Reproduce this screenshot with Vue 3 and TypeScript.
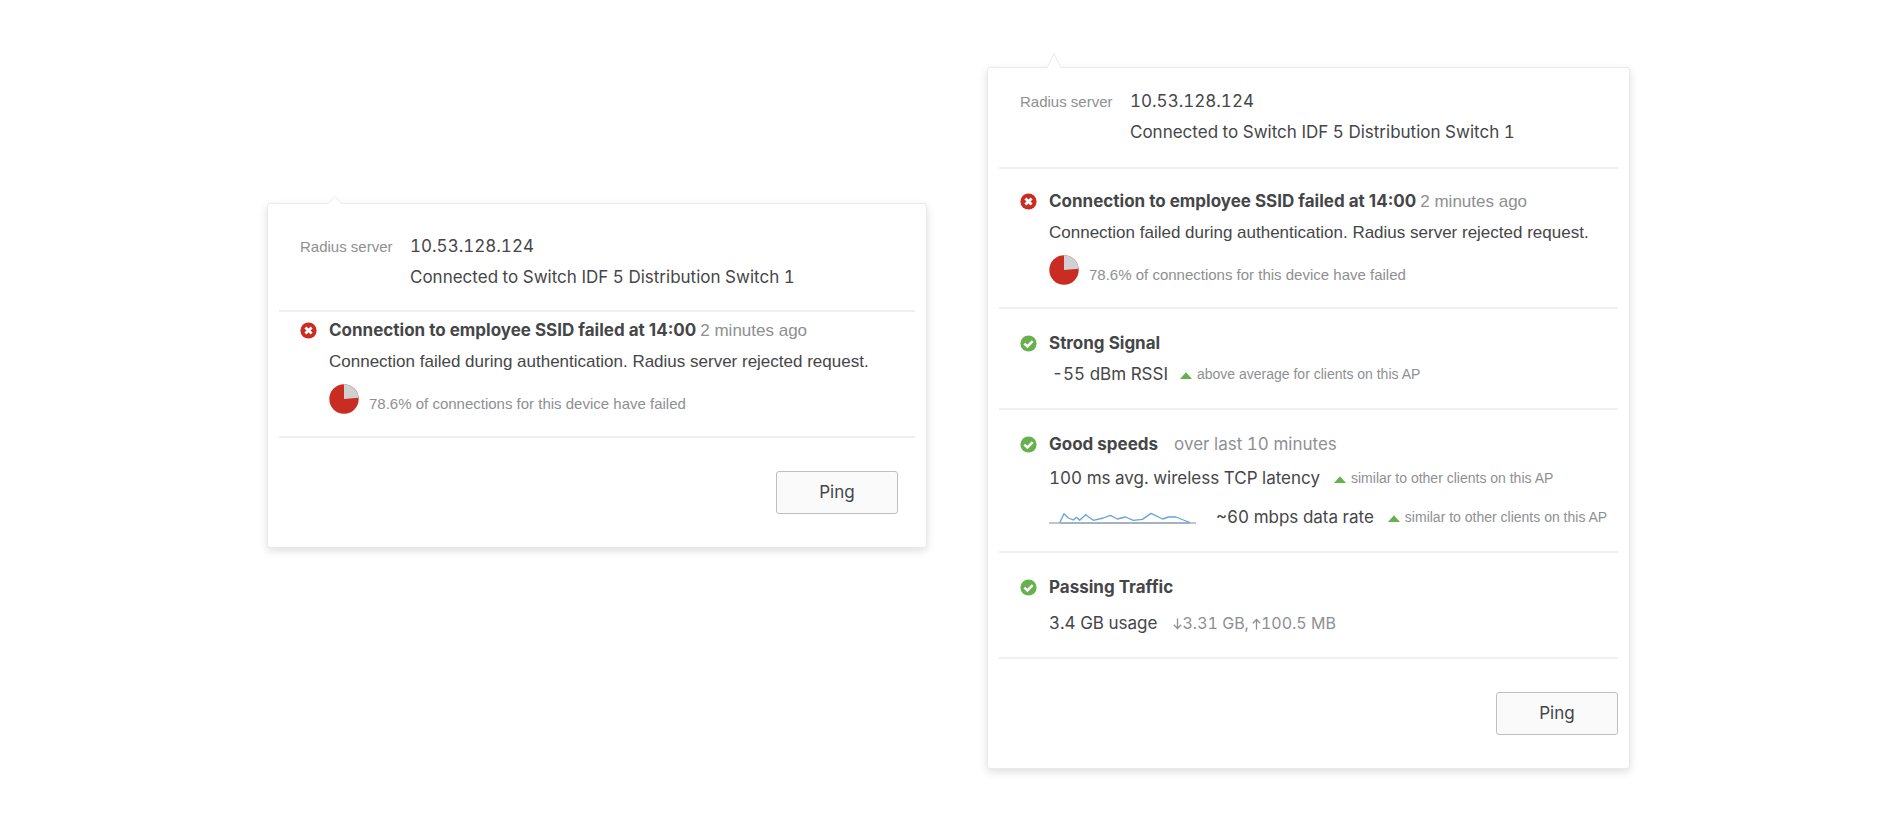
<script setup lang="ts">
interface Metric {
  text: string
  note?: string
  indent?: boolean
  chart?: boolean
  transfer?: { down: string; up: string }
}

interface Check {
  title: string
  aside?: string
  metrics: Metric[]
}

interface Card {
  id: string
  variant: 'compact' | 'full'
  checks: Check[]
}

const checks: Check[] = [
  {
    title: 'Strong Signal',
    metrics: [{ text: '-55 dBm RSSI', note: 'above average for clients on this AP', indent: true }],
  },
  {
    title: 'Good speeds',
    aside: 'over last 10 minutes',
    metrics: [
      { text: '100 ms avg. wireless TCP latency', note: 'similar to other clients on this AP' },
      { text: '~60 mbps data rate', note: 'similar to other clients on this AP', chart: true },
    ],
  },
  {
    title: 'Passing Traffic',
    metrics: [{ text: '3.4 GB usage', transfer: { down: '3.31 GB,', up: '100.5 MB' } }],
  },
]

const cards: Card[] = [
  { id: 'summary', variant: 'compact', checks: [] },
  { id: 'details', variant: 'full', checks },
]
</script>

<template>
  <main class="page">
    <article v-for="card in cards" :key="card.id" class="card" :class="card.variant">
      <svg class="pointer" viewBox="0 0 14 14" preserveAspectRatio="none" aria-hidden="true">
        <path d="M0 14 L7 0 L14 14 Z" fill="#fff" />
        <path d="M0.5 13 L7 0.5 L13.5 13" fill="none" stroke="#e8e8e8" vector-effect="non-scaling-stroke" />
      </svg>

      <dl class="server">
        <dt>Radius server</dt>
        <dd>10.53.128.124</dd>
        <dd>Connected to Switch IDF 5 Distribution Switch 1</dd>
      </dl>

      <section class="block issue">
        <svg class="status" viewBox="0 0 17 17" aria-hidden="true">
          <circle cx="8.5" cy="8.5" r="8.1" fill="#c92d22" />
          <path d="M5.4 5.4 L11.6 11.6 M11.6 5.4 L5.4 11.6" stroke="#fff" stroke-width="2.8" />
        </svg>
        <div class="body">
          <h2>Connection to employee SSID failed at 14:00 <span class="ago">2 minutes ago</span></h2>
          <p class="reason">Connection failed during authentication. Radius server rejected request.</p>
          <div class="ratio">
            <svg class="pie" viewBox="0 0 30 30" aria-hidden="true">
              <circle cx="15" cy="15" r="14.7" fill="#c92d22" />
              <path d="M15 15 L15 0.3 A14.7 14.7 0 0 1 29.6 13.7 Z" fill="#d0d0d2" />
            </svg>
            <span>78.6% of connections for this device have failed</span>
          </div>
        </div>
      </section>

      <section v-for="check in card.checks" :key="check.title" class="block check">
        <svg class="status" viewBox="0 0 17 17" aria-hidden="true">
          <circle cx="8.5" cy="8.5" r="8.1" fill="#66b14e" />
          <path d="M4.3 8.6 L7.4 11.5 L12.7 6.1" fill="none" stroke="#fff" stroke-width="2.5" />
        </svg>
        <div class="body">
          <h2>{{ check.title }} <span v-if="check.aside" class="aside">{{ check.aside }}</span></h2>
          <div
            v-for="metric in check.metrics"
            :key="metric.text"
            class="metric"
            :class="{ indent: metric.indent, usage: metric.transfer }"
          >
            <svg v-if="metric.chart" class="spark" viewBox="27 30 441 36" aria-hidden="true">
              <path d="M27 63 H468" stroke="#c4c4c4" stroke-width="6" />
              <path d="M58 63 H450" stroke="#9cadbd" stroke-width="5" />
              <path
                d="M60 61 L72 35 L85 48 L100 54 L109 46 L119 55 L137 38 L160 55 L190 48 L211 40 L232 51 L256 45 L280 55 L307 52 L333 34 L368 51 L385 45 L408 45 L430 54 L450 62"
                fill="none"
                stroke="#66a3dd"
                stroke-width="4"
                stroke-linejoin="round"
              />
            </svg>
            <span>{{ metric.text }}</span>
            <span v-if="metric.note" class="note">
              <svg class="up" viewBox="0 0 12 12" aria-hidden="true">
                <path d="M0 10 L6 3.2 L12 10 Z" fill="#66b14e" />
              </svg>
              {{ metric.note }}
            </span>
            <span v-if="metric.transfer" class="transfer">
              <svg class="arrow" viewBox="0 0 9 12" role="img" aria-label="down">
                <path d="M4.5 0.5 V10.5 M0.8 6.8 L4.5 10.5 L8.2 6.8" />
              </svg>
              <span>{{ metric.transfer.down }}</span>
              <svg class="arrow second" viewBox="0 0 9 12" role="img" aria-label="up">
                <path d="M4.5 11.5 V1.5 M0.8 5.2 L4.5 1.5 L8.2 5.2" />
              </svg>
              <span>{{ metric.transfer.up }}</span>
            </span>
          </div>
        </div>
      </section>

      <footer>
        <button type="button">Ping</button>
      </footer>
    </article>
  </main>
</template>

<style>
body {
  background: #fff;
}
</style>

<style scoped>
.page {
  display: grid;
  grid-template-columns: 660fr 643fr;
  gap: 60px;
  align-items: start;
  padding: 67px 250px 60px 267px;
  color: #454648;
  font: 17px/31px Inter, "Liberation Sans", sans-serif;
  font-variant-numeric: tabular-nums;
  white-space: nowrap;
}

.card {
  position: relative;
  padding: 1px 11px 2px;
  background: #fff;
  border: 1px solid #e9e9e9;
  border-radius: 3px;
  box-shadow: 0 3px 8px rgba(0, 0, 0, 0.13);
}

.compact {
  margin-top: 136px;
}

.pointer {
  position: absolute;
  bottom: 100%;
  left: 59px;
  width: 14px;
  height: 15px;
}

.compact .pointer {
  left: 60px;
  height: 8px;
}

h2,
p,
dl,
dd {
  margin: 0;
}

.server {
  display: grid;
  grid-template-columns: 110px 1fr;
  padding: 17px 21px 19px;
  border-bottom: 2px solid #f0f0f0;
}

.compact .server {
  padding: 26px 21px 17px;
}

.server dt {
  color: #8e8f91;
  font-family: "Liberation Sans", Arial, sans-serif;
  font-size: 15px;
}

.server dd {
  grid-column: 2;
}

.block {
  display: flex;
  gap: 12px;
  padding: 19px 0 18px 21px;
  border-bottom: 2px solid #f0f0f0;
}

.issue {
  padding-top: 17px;
  padding-bottom: 22px;
}

.compact .issue {
  padding-top: 3px;
}

.status {
  flex: none;
  width: 17px;
  height: 17px;
  margin-top: 7px;
}

h2 {
  font-size: 17px;
  line-height: 31px;
  font-weight: 700;
  font-variant-numeric: normal;
}

.ago,
.reason {
  font-family: "Liberation Sans", Arial, sans-serif;
  font-weight: 400;
}

.ago,
.aside {
  color: #8e8f91;
  font-weight: 400;
}

.aside {
  margin-left: 12px;
  font-variant-numeric: tabular-nums;
}

.ratio {
  display: flex;
  align-items: flex-end;
  gap: 10px;
  margin-top: 7px;
  color: #8e8f91;
  font: 15px/20px "Liberation Sans", Arial, sans-serif;
}

.pie {
  width: 30px;
  height: 30px;
}

.metric {
  display: flex;
  align-items: center;
}

.indent {
  padding-left: 3px;
}

.metric + .metric {
  margin-top: 8px;
}

h2:has(.aside) + .metric {
  margin-top: 3px;
}

.usage {
  margin-top: 5px;
}

.spark {
  width: 147px;
  height: 12px;
  margin-right: 20px;
}

.note {
  display: flex;
  align-items: center;
  gap: 5px;
  margin-left: 14px;
  color: #8e8f91;
  font-family: "Liberation Sans", Arial, sans-serif;
  font-size: 14px;
}

.indent .note {
  margin-left: 12px;
}

.up {
  width: 12px;
  height: 12px;
}

.transfer {
  display: flex;
  align-items: center;
  margin-left: 16px;
  color: #8e8f91;
  font-size: 16px;
}

.arrow {
  width: 9px;
  height: 12px;
  fill: none;
  stroke: #8e8f91;
  stroke-width: 1.3;
}

.second {
  margin-left: 3px;
}

footer {
  display: flex;
  justify-content: flex-end;
  padding: 33px 0 31px;
}

.compact footer {
  padding-right: 17px;
}

button {
  width: 122px;
  height: 43px;
  padding: 0;
  color: #454648;
  background: #fafafa;
  border: 1px solid #bfbfbf;
  border-radius: 3px;
  font: inherit;
}
</style>
